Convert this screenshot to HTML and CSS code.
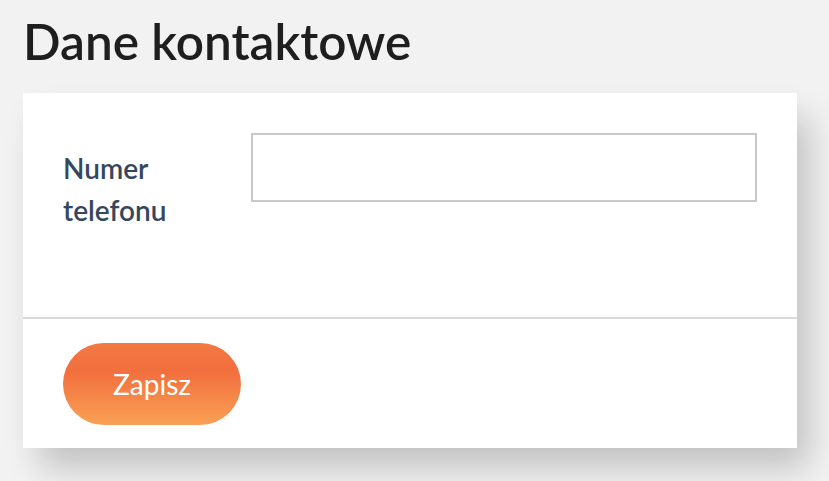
FILE: index.html
```html
<!DOCTYPE html>
<html lang="pl">
<head>
<meta charset="utf-8">
<title>Dane kontaktowe</title>
<link rel="stylesheet" href="styles.css">
</head>
<body>
<main class="page">
  <h1 class="title">Dane kontaktowe</h1>
  <form class="card">
    <div class="card-body">
      <div class="field">
        <label class="field-label" for="phone">Numer telefonu</label>
        <input class="field-input" id="phone" type="text">
      </div>
    </div>
    <div class="card-footer">
      <button class="btn-save" type="button">Zapisz</button>
    </div>
  </form>
</main>
</body>
</html>
```
FILE: styles.css
```css
html, body {
  margin: 0;
  padding: 0;
  background: #f2f2f2;
}
body {
  font-family: Lato, "Open Sans", "Liberation Sans", sans-serif;
  color: #1e1e1e;
}
.page {
  padding: 0 32px 33px 23px;
}
.title {
  margin: 11px 0 22px;
  font-size: 49.5px;
  line-height: 60px;
  font-weight: 600;
  color: #1e1e1e;
}
.card {
  display: block;
  background: #fff;
  width: 774px;
  box-shadow: 14px 22px 32px -2px rgba(0, 0, 0, 0.2);
}
.card-body {
  padding: 40px 40px 86px;
  border-bottom: 2px solid #d8dbde;
}
.field {
  display: flex;
  align-items: flex-start;
}
.field-label {
  width: 188px;
  flex: none;
  padding-top: 14px;
  font-size: 28px;
  line-height: 42px;
  font-weight: 600;
  color: #35475f;
}
.field-input {
  box-sizing: border-box;
  width: 506px;
  height: 69px;
  border: 2px solid #c8c8c8;
  margin: 0;
  padding: 0 16px;
  background: #fff;
  font: inherit;
}
.card-footer {
  padding: 24px 40px 23px;
}
.btn-save {
  display: block;
  width: 178px;
  height: 82px;
  border: 0;
  border-radius: 41px;
  background: linear-gradient(180deg, #f37842 0%, #f26f3e 35%, #f9a155 100%);
  color: #fff;
  font-family: inherit;
  font-size: 28px;
  font-weight: 400;
  cursor: pointer;
}
```
